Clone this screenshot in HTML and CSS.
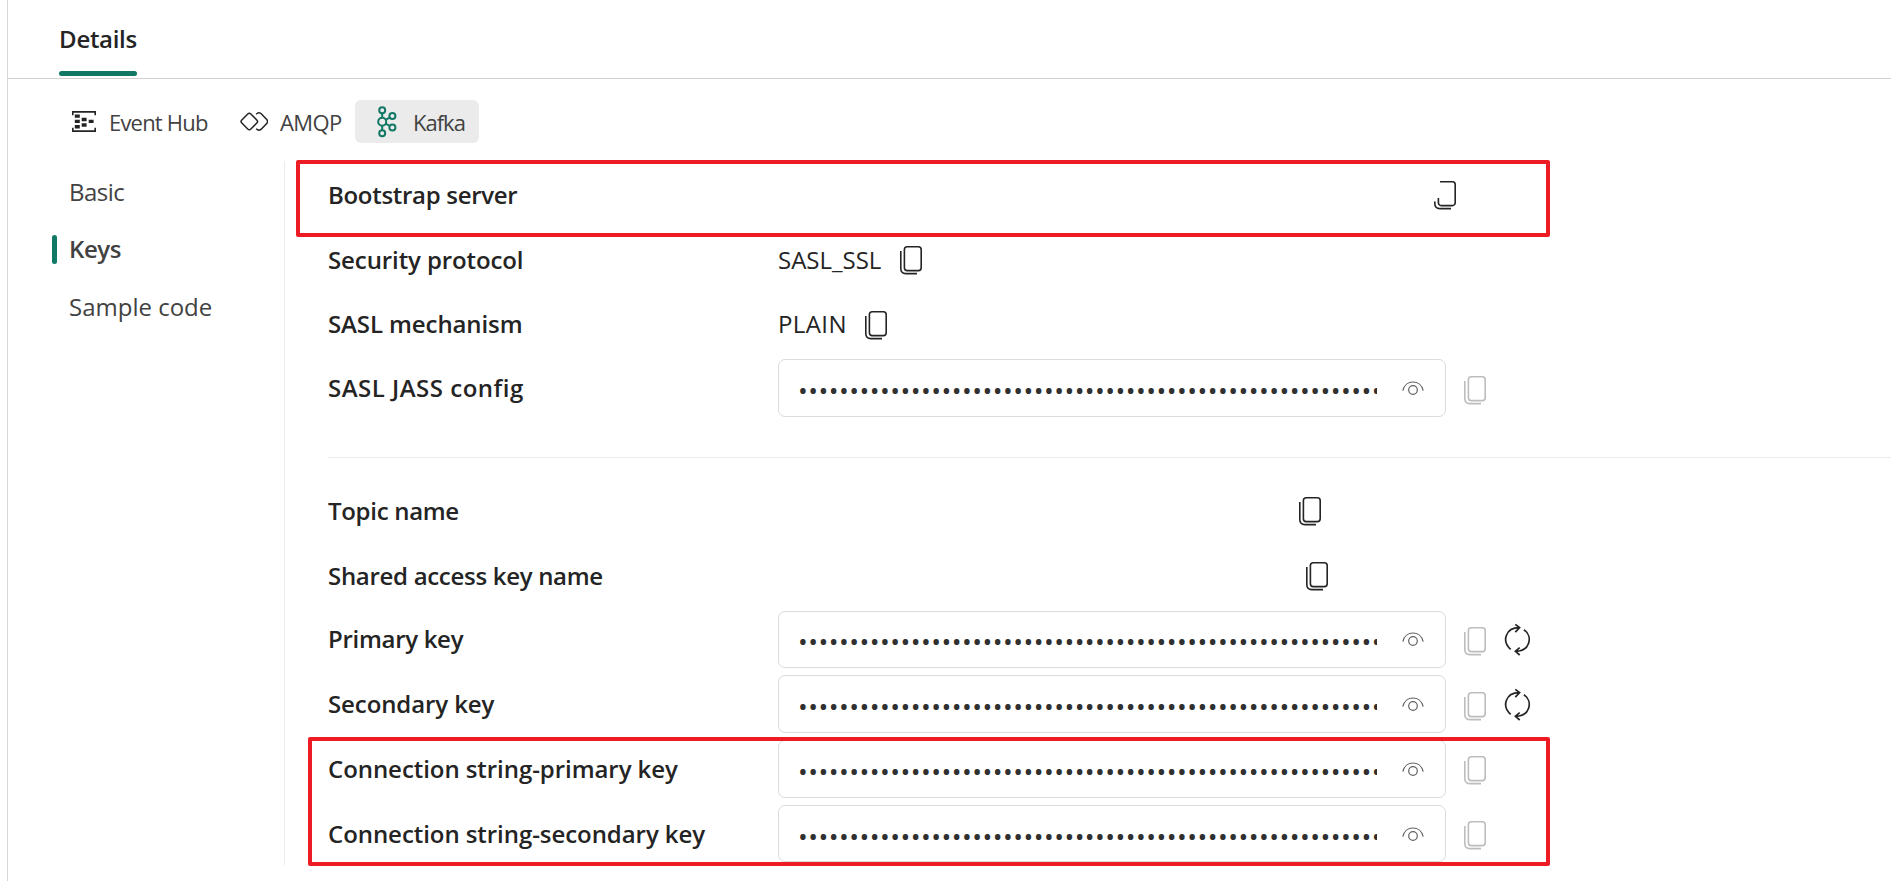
FILE: index.html
```html
<!DOCTYPE html>
<html lang="en">
<head>
<meta charset="utf-8">
<title>Details</title>
<link rel="stylesheet" href="styles.css">
</head>
<body>
<svg class="sprite" aria-hidden="true">
  <symbol id="copy" viewBox="0 0 22 29"><rect x="4.4" y=".8" width="16.8" height="23.8" rx="2.8"/><path d="M.8 5v17.6c0 3.200 2 5 5 5H17"/></symbol>
  <symbol id="copy-cut" viewBox="0 0 22 29"><path d="M6 .8h12.400a2.800 2.800 0 0 1 2.800 2.800v18.200a2.800 2.800 0 0 1-2.800 2.800H7.200a2.800 2.800 0 0 1-2.800-2.800V17M.8 20.500v2.100c0 3.200 2 5 5 5H17"/></symbol>
  <symbol id="eye" viewBox="0 0 22 15"><path d="M.8 9.700C3.300-1.900 18.700-1.900 21.200 9.700"/><circle cx="11" cy="9" r="4.300"/></symbol>
  <symbol id="cycle" viewBox="0 0 28 33"><path d="M6.700 26.300C-2.500 18.500 1.500 4.700 15.200 4.700M11.300 1.300l4.300 3.400-4.300 4.400M20 6.700C29.500 13.800 25.500 28.300 11.800 28.300M15.700 24.700l-4.300 3.600 4.300 3.700"/></symbol>
</svg>

<div class="panel">
  <header class="tabs"><div class="tab">Details</div></header>

  <nav class="protocols">
    <div class="protocol hub">
      <svg class="icon-hub" viewBox="0 0 24 21"><path class="line" d="M.8 4.300V.9h22.400v3.400M.8 16.700v3.400h22.400v-3.400"/><path class="solid" d="M2.800 3.400h5v3.400h-5zM2.800 8.700h5v3.400h-5zM2.800 14h5v3.400h-5zM9.700 6.700h4.900v3.500H9.700zM9.700 12.200h4.900v3.500H9.700zM16.700 8.700h4.900v3.400h-4.900z"/></svg>
      <span>Event Hub</span>
    </div>
    <div class="protocol amqp">
      <svg class="icon-amqp" viewBox="0 0 28 19"><rect x="2.900" y="3.100" width="12.800" height="12.800" rx="2.200" transform="rotate(45 9.300 9.500)"/><path d="M16.200 2.200c1.800-1.800 3.800-1.800 5.500 0l5 5.300c1.200 1.300 1.200 2.700 0 4l-5 5.300c-1.700 1.800-3.700 1.800-5.500 0"/></svg>
      <span>AMQP</span>
    </div>
    <div class="protocol kafka">
      <svg class="icon-kafka" viewBox="0 0 20 32"><circle cx="5.200" cy="4.200" r="3"/><circle cx="5.200" cy="15.700" r="4"/><circle cx="5.200" cy="27.200" r="3"/><circle cx="15.400" cy="9.900" r="3"/><circle cx="15.400" cy="21.500" r="3"/><path d="M5.200 7.200v4.500M5.200 19.700v4.500M8.700 13.800l4.100-2.400M8.700 17.600l4.100 2.400"/></svg>
      <span>Kafka</span>
    </div>
  </nav>

  <main class="body">
    <aside class="side">
      <div class="side-item basic">Basic</div>
      <div class="side-item current">Keys</div>
      <div class="side-item">Sample code</div>
    </aside>

    <div class="content">
      <section class="group">
        <div class="row plain"><span class="label tight">Bootstrap server</span><span class="blank-server"></span><svg class="copy"><use href="#copy-cut"/></svg></div>
        <div class="row plain"><span class="label">Security protocol</span><span class="value ssl">SASL_SSL</span><svg class="copy"><use href="#copy"/></svg></div>
        <div class="row plain"><span class="label">SASL mechanism</span><span class="value mech">PLAIN</span><svg class="copy"><use href="#copy"/></svg></div>
        <div class="row"><span class="label wide">SASL JASS config</span><div class="field"><span class="secret">•••••••••••••••••••••••••••••••••••••••••••••••••••••••••</span><svg class="eye"><use href="#eye"/></svg></div><svg class="copy off"><use href="#copy"/></svg></div>
      </section>
      <section class="group second">
        <div class="row plain"><span class="label tight">Topic name</span><span class="blank-topic"></span><svg class="copy"><use href="#copy"/></svg></div>
        <div class="row plain"><span class="label tight">Shared access key name</span><span class="blank-policy"></span><svg class="copy"><use href="#copy"/></svg></div>
        <div class="row"><span class="label tight">Primary key</span><div class="field"><span class="secret">•••••••••••••••••••••••••••••••••••••••••••••••••••••••••</span><svg class="eye"><use href="#eye"/></svg></div><svg class="copy off"><use href="#copy"/></svg><svg class="cycle"><use href="#cycle"/></svg></div>
        <div class="row"><span class="label">Secondary key</span><div class="field"><span class="secret">•••••••••••••••••••••••••••••••••••••••••••••••••••••••••</span><svg class="eye"><use href="#eye"/></svg></div><svg class="copy off"><use href="#copy"/></svg><svg class="cycle"><use href="#cycle"/></svg></div>
        <div class="row"><span class="label long">Connection string-primary key</span><div class="field"><span class="secret">•••••••••••••••••••••••••••••••••••••••••••••••••••••••••</span><svg class="eye"><use href="#eye"/></svg></div><svg class="copy off"><use href="#copy"/></svg></div>
        <div class="row"><span class="label long">Connection string-secondary key</span><div class="field"><span class="secret">•••••••••••••••••••••••••••••••••••••••••••••••••••••••••</span><svg class="eye"><use href="#eye"/></svg></div><svg class="copy off"><use href="#copy"/></svg></div>
      </section>
    </div>
  </main>
</div>

<div class="mark mark-server"></div>
<div class="mark mark-strings"></div>
</body>
</html>
```
FILE: styles.css
```css
* { box-sizing: border-box; }
body {
  margin: 0;
  height: 881px;
  overflow: hidden;
  position: relative;
  background: #fff;
  color: #242424;
  font: 24px/32px "Open Sans", "Noto Sans", sans-serif;
}
svg { display: block; flex: none; fill: none; stroke: currentColor; }
.sprite { position: absolute; width: 0; height: 0; }

.panel { margin-left: 7px; height: 881px; border-left: 1px solid #d6d6d6; }

/* Top tab strip */
.tabs { height: 79px; padding-left: 51px; border-bottom: 1px solid #d1d1d1; display: flex; }
.tab {
  width: 78px;
  height: 76px;
  padding-top: 23px;
  font-weight: 600;
  letter-spacing: -.3px;
  white-space: nowrap;
  display: flex;
  flex-direction: column;
  align-items: center;
  justify-content: space-between;
}
.tab::after { content: ""; width: 78px; height: 5px; border-radius: 3px; background: #117865; }

/* Protocol switcher */
.protocols { display: flex; padding: 21px 0 0 64px; height: 82px; font-size: 22px; color: #424242; }
.protocol { display: flex; align-items: center; height: 43px; white-space: nowrap; }
.hub { width: 168px; gap: 13px; letter-spacing: -.8px; }
.amqp { width: 115px; gap: 12px; letter-spacing: -.6px; }
.kafka { width: 124px; padding-left: 22px; gap: 16px; border-radius: 6px; background: #ebebeb; letter-spacing: -1px; }
.icon-hub { width: 24px; height: 21px; color: #242424; stroke-width: 1.600; }
.icon-hub .solid { fill: #242424; stroke: none; }
.icon-amqp { width: 28px; height: 19px; color: #242424; stroke-width: 1.500; }
.icon-kafka { width: 20px; height: 32px; color: #117865; stroke-width: 2; }

/* Two-column body */
.body { display: flex; height: 704px; }
.side { width: 277px; padding: 2px 0 0 44px; border-right: 1px solid #ebebeb; color: #424242; }
.side-item { height: 57.500px; display: flex; align-items: center; padding-left: 17px; }
.basic { letter-spacing: -.5px; }
.current { padding-left: 0; font-weight: 600; letter-spacing: -.4px; }
.current::before { content: ""; width: 5px; height: 29px; margin-right: 12px; border-radius: 3px; background: #117865; }

.content { flex: 1; padding: 4px 0 0 43px; }
.group { display: flex; flex-direction: column; gap: 7.250px; height: 293px; border-bottom: 1px solid #ebebeb; }
.second { height: auto; margin-top: 23px; border-bottom: 0; }
.row { height: 57.500px; display: flex; align-items: center; }
.plain { padding-top: 2px; }
.label { width: 450px; font-weight: 600; white-space: nowrap; letter-spacing: -.1px; }
.tight { letter-spacing: -.3px; }
.wide { letter-spacing: .5px; }
.long { letter-spacing: -.06px; }
.value { white-space: nowrap; }
.ssl { width: 122px; }
.mech { width: 87px; letter-spacing: .4px; }
.blank-server { width: 656px; }
.blank-topic { width: 521px; }
.blank-policy { width: 528px; }

.field {
  width: 668px;
  height: 57.500px;
  margin-right: 18px;
  padding-left: 19px;
  display: flex;
  align-items: center;
  border: 1px solid #dcdcdc;
  border-radius: 7px;
}
.secret { width: 579px; padding-top: 4px; overflow: hidden; white-space: nowrap; font-size: 26px; letter-spacing: .470px; color: #303030; }
.eye { width: 22px; height: 15px; margin: 1px 0 0 25px; color: #616161; stroke-width: 1.200; }
.copy { width: 22px; height: 29px; margin-top: 2px; stroke-width: 1.600; }
.off { color: #bdbdbd; margin-top: 4px; }
.cycle { width: 28px; height: 33px; margin-left: 18px; stroke-width: 1.700; }

/* Highlight frames over the page */
.mark { position: absolute; border: 4px solid #ed1c24; border-radius: 2px; }
.mark-server { left: 296px; top: 160px; width: 1254px; height: 77px; }
.mark-strings { left: 308px; top: 737px; width: 1242px; height: 129px; }
```
